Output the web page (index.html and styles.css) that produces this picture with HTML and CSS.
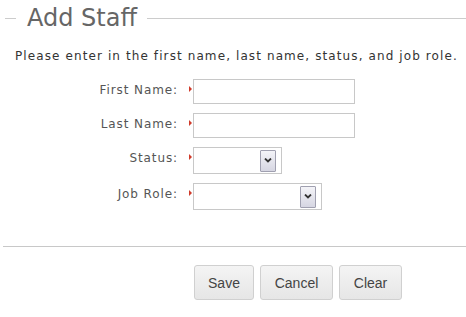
FILE: index.html
```html
<!DOCTYPE html>
<html>
<head>
<meta charset="utf-8">
<link rel="stylesheet" href="styles.css">
</head>
<body>
<div class="page">
  <h1 class="title"><span class="title-text">Add Staff</span></h1>
  <p class="intro">Please enter in the first name, last name, status, and job role.</p>
  <form class="form">
    <div class="row">
      <label class="label">First Name:</label>
      <span class="req"></span>
      <span class="input wide"></span>
    </div>
    <div class="row">
      <label class="label">Last Name:</label>
      <span class="req"></span>
      <span class="input wide"></span>
    </div>
    <div class="row">
      <label class="label">Status:</label>
      <span class="req"></span>
      <span class="select status"><span class="arrow"><svg width="8" height="5" viewBox="0 0 8 5"><path d="M1 0.5 L4 3.5 L7 0.5" fill="none" stroke="#333" stroke-width="1.8"/></svg></span></span>
    </div>
    <div class="row">
      <label class="label">Job Role:</label>
      <span class="req"></span>
      <span class="select role"><span class="arrow"><svg width="8" height="5" viewBox="0 0 8 5"><path d="M1 0.5 L4 3.5 L7 0.5" fill="none" stroke="#333" stroke-width="1.8"/></svg></span></span>
    </div>
  </form>
  <hr class="divider">
  <div class="actions">
    <button class="btn save" type="button">Save</button>
    <button class="btn cancel" type="button">Cancel</button>
    <button class="btn clear" type="button">Clear</button>
  </div>
</div>
</body>
</html>
```

FILE: styles.css
```css
html, body {
  margin: 0;
  padding: 0;
  background: #fff;
}
.page {
  width: 466px;
  font-family: "DejaVu Sans", Verdana, sans-serif;
}
.title {
  display: flex;
  align-items: center;
  margin: 0;
  padding: 0 0 0 5px;
  height: 36px;
  font-weight: normal;
  font-size: 24px;
  color: #666;
}
.title::before {
  content: "";
  width: 11px;
  border-top: 1px solid #ccc;
  margin-right: 11px;
}
.title::after {
  content: "";
  flex: 1;
  border-top: 1px solid #ccc;
  margin-left: 10px;
}
.title-text {
  line-height: 36px;
}
.intro {
  margin: 12px 0 0 15px;
  font-size: 12px;
  line-height: 16px;
  letter-spacing: 1.1px;
  color: #333;
}
.form {
  display: flex;
  flex-direction: column;
  gap: 9px;
  margin-top: 15px;
}
.row {
  display: flex;
  align-items: flex-start;
}
.label {
  width: 178px;
  margin-right: -1px;
  text-align: right;
  font-size: 12px;
  line-height: 16px;
  letter-spacing: 0.9px;
  padding-top: 3px;
  color: #555;
}
.req {
  width: 0;
  height: 0;
  margin: 7px 0 0 12px;
  border-top: 3px solid transparent;
  border-bottom: 3px solid transparent;
  border-left: 3px solid #d03a2a;
}
.input {
  display: block;
  margin-left: 1px;
  height: 23px;
  border: 1px solid #c8c8c8;
  background: #fff;
}
.wide { width: 160px; }
.select {
  display: flex;
  justify-content: flex-end;
  align-items: center;
  margin-left: 1px;
  height: 25px;
  border: 1px solid #c8c8c8;
  background: #fff;
  box-sizing: content-box;
}
.status { width: 87px; }
.role { width: 127px; }
.arrow {
  display: flex;
  align-items: center;
  justify-content: center;
  width: 14px;
  height: 20px;
  margin-right: 5px;
  border: 1px solid #a0a0b0;
  border-radius: 1px;
  background: linear-gradient(#f4f4f8, #d6d6e2);
}
.arrow svg { display: block; }
.divider {
  margin: 36px 0 0 3px;
  border: 0;
  border-top: 1px solid #c8c8c8;
  height: 0;
}
.actions {
  display: flex;
  gap: 6px;
  padding-left: 194px;
  margin-top: 18px;
}
.btn {
  height: 35px;
  padding: 0;
  border: 1px solid #d0d0d0;
  border-radius: 3px;
  background: linear-gradient(#f4f4f4, #e6e6e6);
  font-family: "Liberation Sans", Arial, sans-serif;
  font-size: 14px;
  color: #444;
}
.save { width: 60px; }
.cancel { width: 73px; }
.clear { width: 63px; }
```
